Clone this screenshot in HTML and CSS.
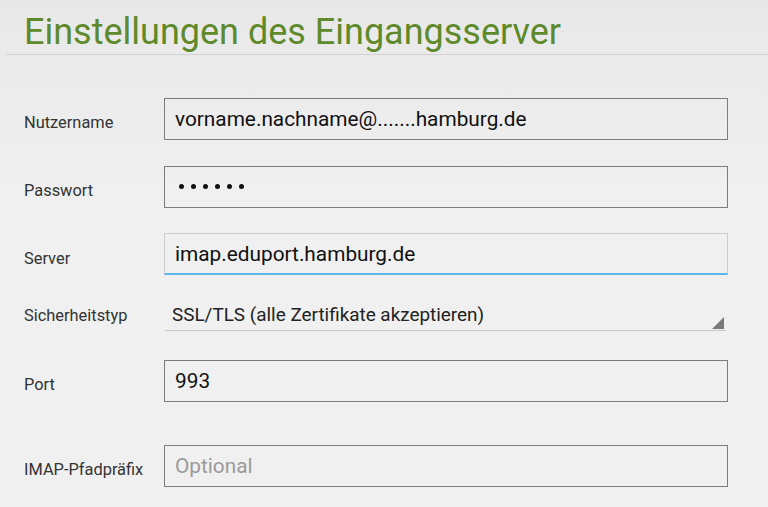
FILE: index.html
```html
<!DOCTYPE html>
<html lang="de">
<head>
<meta charset="utf-8">
<link rel="stylesheet" href="styles.css">
</head>
<body>
<header class="head">
  <h1 class="title">Einstellungen des Eingangsserver</h1>
</header>
<main class="form">
  <div class="row r1">
    <label class="label">Nutzername</label>
    <div class="field box">vorname.nachname@.......hamburg.de</div>
  </div>
  <div class="row r2">
    <label class="label">Passwort</label>
    <div class="field box pw" aria-label="Passwort"><span class="dot"></span><span class="dot"></span><span class="dot"></span><span class="dot"></span><span class="dot"></span><span class="dot"></span></div>
  </div>
  <div class="row r3">
    <label class="label">Server</label>
    <div class="field box focus">imap.eduport.hamburg.de</div>
  </div>
  <div class="row r4">
    <label class="label">Sicherheitstyp</label>
    <div class="field select">SSL/TLS (alle Zertifikate akzeptieren)<span class="tri"></span></div>
  </div>
  <div class="row r5">
    <label class="label">Port</label>
    <div class="field box">993</div>
  </div>
  <div class="row r6">
    <label class="label">IMAP-Pfadpräfix</label>
    <div class="field box ph">Optional</div>
  </div>
</main>
</body>
</html>
```
FILE: styles.css
```css
html, body {
  margin: 0;
  padding: 0;
}
body {
  width: 768px;
  height: 507px;
  overflow: hidden;
  background: linear-gradient(#e8e8e8, #f0f0f0 40%, #f0f0f0);
  font-family: Roboto, "Noto Sans", sans-serif;
  color: #222;
}
.head {
  margin-left: 6px;
  height: 55px;
  border-bottom: 1px solid #d2d2d2;
  box-sizing: border-box;
}
.title {
  margin: 0;
  padding-left: 18px;
  padding-top: 10px;
  font-size: 36px;
  line-height: 44px;
  font-weight: 400;
  color: #5e8a2c;
}
.form {
  display: flex;
  flex-direction: column;
}
.row {
  display: flex;
  align-items: center;
  height: 42px;
}
.r1 { margin-top: 43px; }
.r2 { margin-top: 26px; }
.r3 { margin-top: 25px; }
.r4 { margin-top: 20px; height: 36px; }
.r5 { margin-top: 29px; }
.r6 { margin-top: 43px; }
.label {
  width: 140px;
  padding-left: 24px;
  font-size: 16.4px;
  color: #333;
  padding-top: 6px;
}
.r3 .label { padding-top: 8px; }
.r4 .label { padding-top: 4px; }
.field {
  width: 564px;
  height: 42px;
  box-sizing: border-box;
  display: flex;
  align-items: center;
  font-size: 20.8px;
  color: #111;
}
.box {
  border: 1.5px solid #7d7d7d;
  padding-left: 10px;
}
.pw {
  gap: 7px;
  padding-left: 14px;
  padding-bottom: 2px;
}
.dot {
  width: 5px;
  height: 5px;
  border-radius: 50%;
  background: #111;
}
.focus {
  border: 1.5px solid #cdcdcd;
  border-bottom: 2px solid #5ab8ea;
}
.ph {
  color: #9a9a9a;
}
.select {
  position: relative;
  height: 36px;
  margin-left: 1px;
  width: 561px;
  padding-left: 7px;
  padding-top: 4px;
  font-size: 18.9px;
  color: #222;
  border-bottom: 1.5px solid #c8c8c8;
}
.tri {
  position: absolute;
  right: 2px;
  bottom: 1px;
  width: 0;
  height: 0;
  border-style: solid;
  border-width: 0 0 12px 12px;
  border-color: transparent transparent #7a7a7a transparent;
}
```
